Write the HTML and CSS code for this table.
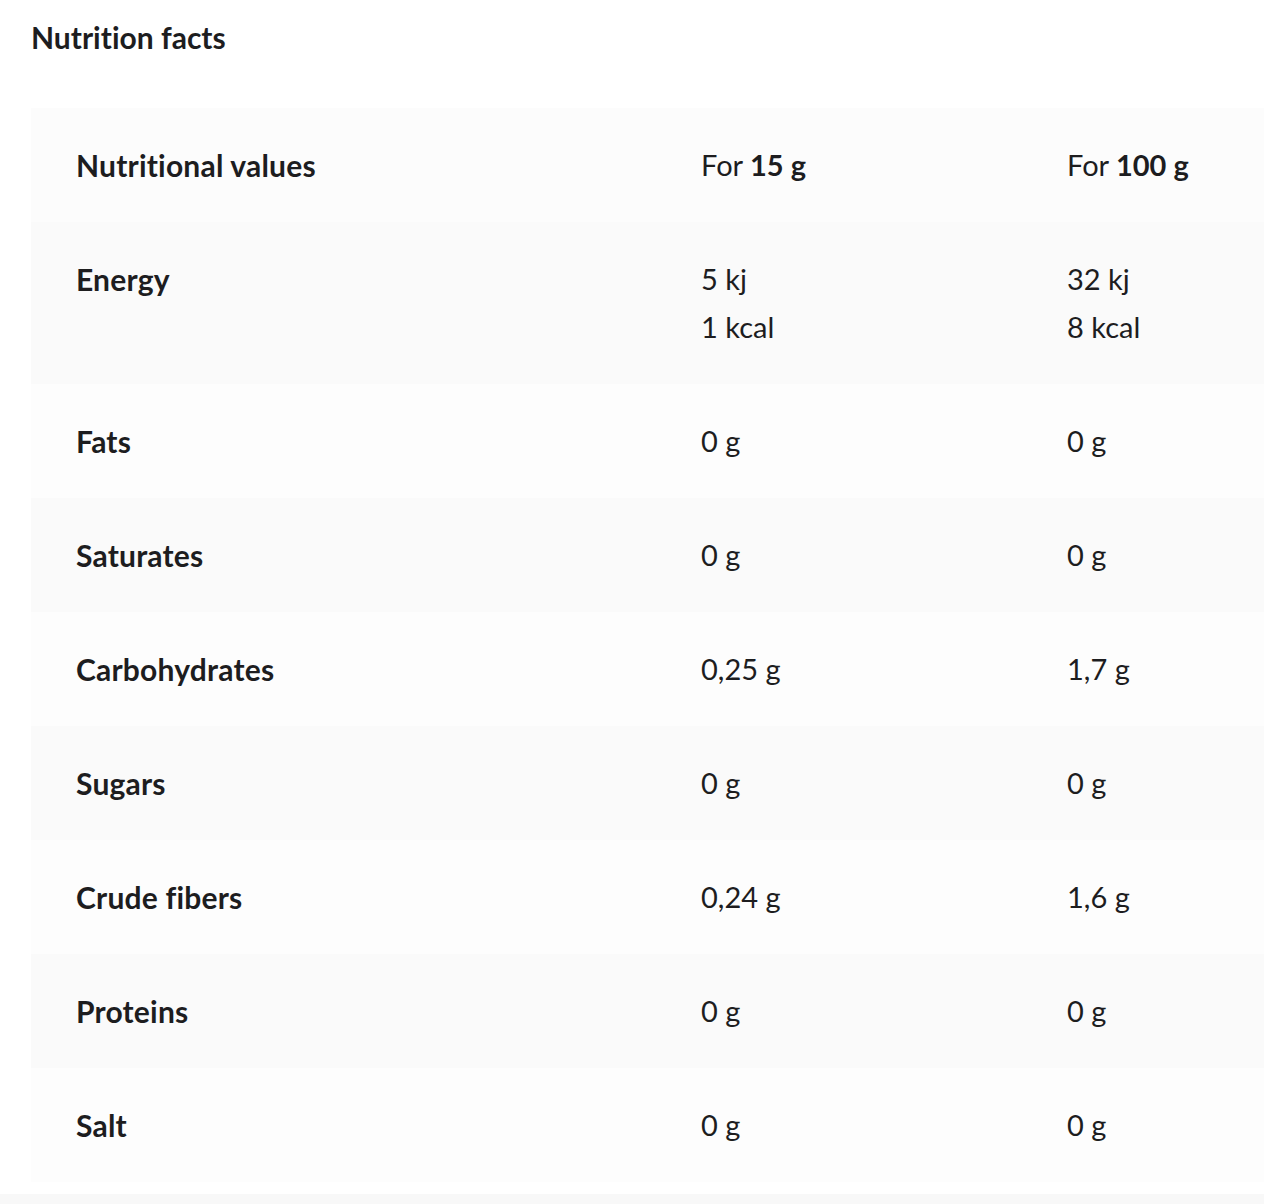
FILE: index.html
```html
<!DOCTYPE html>
<html lang="en">
<head>
<meta charset="utf-8">
<title>Nutrition facts</title>
<link rel="stylesheet" href="styles.css">
</head>
<body>
<main class="page">
  <h2 class="title">Nutrition facts</h2>
  <div class="table-wrap">
    <table class="facts">
      <colgroup>
        <col class="c1"><col class="c2"><col class="c3">
      </colgroup>
      <thead>
        <tr class="row-head">
          <th>Nutritional values</th>
          <td>For <b>15 g</b></td>
          <td>For <b>100 g</b></td>
        </tr>
      </thead>
      <tbody>
        <tr class="alt"><th>Energy</th><td>5 kj<br>1 kcal</td><td>32 kj<br>8 kcal</td></tr>
        <tr><th>Fats</th><td>0 g</td><td>0 g</td></tr>
        <tr class="alt"><th>Saturates</th><td>0 g</td><td>0 g</td></tr>
        <tr><th>Carbohydrates</th><td>0,25 g</td><td>1,7 g</td></tr>
        <tr class="alt"><th>Sugars</th><td>0 g</td><td>0 g</td></tr>
        <tr><th>Crude fibers</th><td>0,24 g</td><td>1,6 g</td></tr>
        <tr class="alt"><th>Proteins</th><td>0 g</td><td>0 g</td></tr>
        <tr><th>Salt</th><td>0 g</td><td>0 g</td></tr>
      </tbody>
    </table>
  </div>
  <div class="after"></div>
</main>
</body>
</html>
```
FILE: styles.css
```css
html, body {
  margin: 0;
  padding: 0;
  background: #ffffff;
}
body {
  font-family: "Lato", "Liberation Sans", sans-serif;
  color: #1d1d1f;
  overflow-x: hidden;
  font-variant-ligatures: none;
  font-feature-settings: "liga" 0, "clig" 0;
}
.page {
  padding-top: 15px;
}
.title {
  margin: 0 0 0 31px;
  font-size: 30px;
  line-height: 44px;
  font-weight: 700;
}
.table-wrap {
  margin-top: 49px;
  margin-left: 31px;
  overflow: hidden;
}
.facts {
  border-collapse: collapse;
  width: 1300px;
  table-layout: fixed;
  font-size: 29px;
}
.c1 { width: 625px; }
.c2 { width: 366px; }
.facts th, .facts td {
  text-align: left;
  vertical-align: top;
  padding: 33px 45px;
  line-height: 48px;
}
.facts th {
  font-weight: 700;
  font-size: 30px;
  letter-spacing: 0.2px;
}
.facts td {
  font-weight: 400;
}
.facts b {
  font-weight: 700;
}
.row-head {
  background: #fcfcfc;
}
.facts tbody tr {
  background: #fdfdfd;
}
.facts tbody tr.alt {
  background: #fafafa;
}
.after {
  margin-top: 12px;
  height: 40px;
  background: #f8f8f8;
}
```
